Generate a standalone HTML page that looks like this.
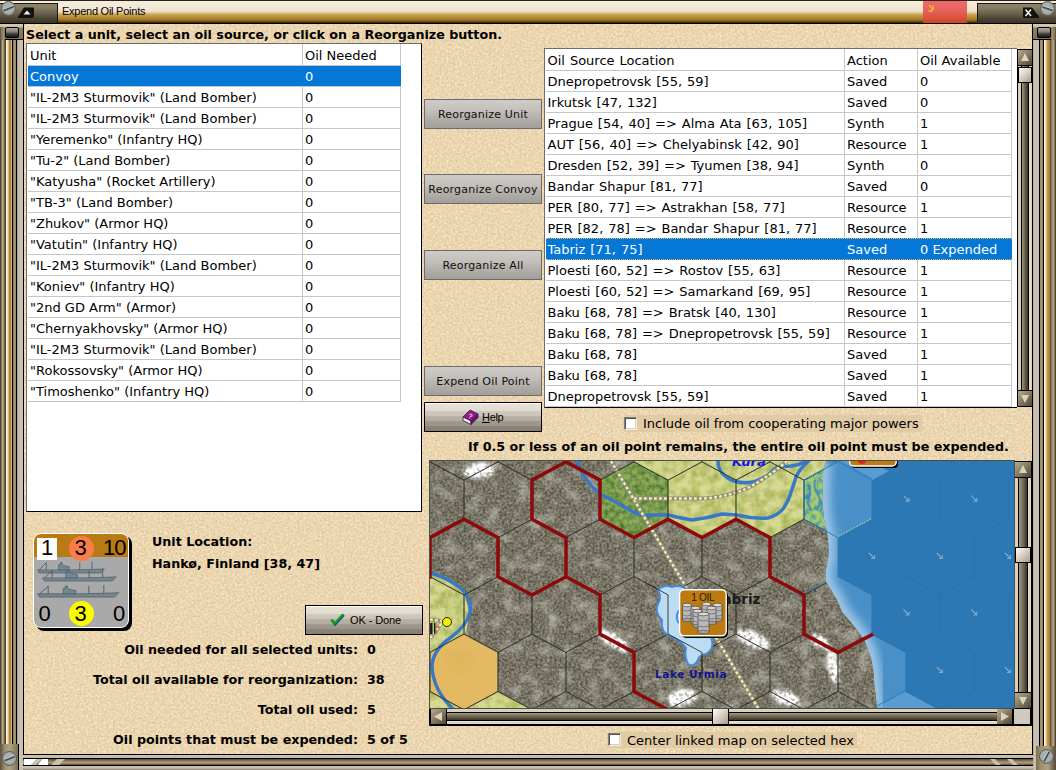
<!DOCTYPE html><html lang="en"><head><meta charset="utf-8"><title>Expend Oil Points</title><style>html,body{margin:0;padding:0}
body{width:1056px;height:770px;overflow:hidden;position:relative;background:#e9d4aa;font-family:"DejaVu Sans","Liberation Sans",sans-serif;font-size:13px;color:#000;line-height:20px}
div,span{box-sizing:border-box}
.abs{position:absolute}
#bgtex{position:absolute;left:0;top:0;width:1056px;height:770px}
#lt{position:absolute;left:26px;top:43px;width:396px;height:469px;background:#fff;border:1px solid #6e6e6e;border-right-color:#000;border-bottom-color:#000;overflow:hidden}
#rt{position:absolute;left:544px;top:48px;width:473px;height:360px;background:#fff;border:1px solid #6e6e6e;border-right:0;border-bottom-color:#000;overflow:hidden}
.row{position:absolute;left:1px;height:21px;border-bottom:1px solid #c6c6c6;white-space:nowrap}
#lt .row{width:373px}
#rt .row{width:466px}
.row span{position:absolute;top:1px;height:20px;line-height:20px}
.row.sel{background:#0577d6;color:#fff}
#rt .row.sel{border-top:1px dotted #e8b070;border-bottom:1px dotted #e8b070;top:189px!important;height:22px}
#rt .row.sel span{top:1px}
.vl{position:absolute;width:1px;background:#c6c6c6}
.c1{left:2px}.c2{left:277px}
.d1{left:1.5px;word-spacing:0.8px}.d2{left:301px}.d3{left:374px}
.b{position:absolute;font-weight:bold;font-size:12.7px;white-space:nowrap;line-height:16px;height:16px}
.t{position:absolute;white-space:nowrap;line-height:16px;height:16px}
.btn{position:absolute;width:118px;height:30px;border:1px solid #6c6c6c;background:linear-gradient(#cfcbc6 0%,#c4c0bb 35%,#b0aca7 70%,#a29e99 100%);font-size:11px;letter-spacing:0.2px;text-align:center;line-height:29px;white-space:nowrap;color:#111}
.btn2{position:absolute;width:118px;height:30px;border:1px solid #000;background:linear-gradient(#fffdf6 0,#fffdf6 1px,#e6e0d6 1px,#e0dad0 8px,#d0c9be 8px,#cac3b8 13px,#b9b2a6 13px,#b2ab9f 18px,#a19a8e 18px,#9a9387 23px,#8b8478 23px,#857e72 28px);font-family:"Liberation Sans",sans-serif;font-size:11px;white-space:nowrap;color:#000}
.cb{position:absolute;width:13px;height:13px;border:1px solid;border-color:#808080 #f4ecdc #f4ecdc #808080;background:#fff;box-shadow:inset 1px 1px 0 #505050,inset -1px -1px 0 #d8d0c4}
</style></head><body>
<svg id="bgtex" width="1056" height="770"><defs><filter color-interpolation-filters="sRGB" id="pf" x="0" y="0" width="100%" height="100%"><feTurbulence type="fractalNoise" baseFrequency="0.5" numOctaves="3" seed="3" result="n"/><feColorMatrix type="matrix" values="0 0 0 0 0.925  0 0 0 0 0.835  0 0 0 0 0.68  1.1 1.1 0 0 -0.72"/></filter><filter color-interpolation-filters="sRGB" id="pf2" x="0" y="0" width="100%" height="100%"><feTurbulence type="fractalNoise" baseFrequency="0.45" numOctaves="3" seed="11"/><feColorMatrix type="matrix" values="0 0 0 0 0.985  0 0 0 0 0.935  0 0 0 0 0.835  0 1.1 1.1 0 -0.8"/></filter></defs><rect width="1056" height="770" fill="#dfc597"/><rect width="1056" height="770" filter="url(#pf)"/><rect width="1056" height="770" filter="url(#pf2)"/></svg>
<div class="abs" style="left:0;top:0;width:1056px;height:24px;background:linear-gradient(to bottom,#2a2418 0px,#2a2418 1px,#f4ecdc 1px,#f4ecdc 2px,#f3ebdb 2px,#f3ebdb 4px,#f2eada 4px,#f2eada 6px,#f2e9d8 6px,#f2e9d8 7px,#f1e8d6 7px,#f1e8d6 8px,#f1e7d4 8px,#f1e7d4 9px,#f0e5d0 9px,#f0e5d0 10px,#efe2ca 10px,#efe2ca 11px,#ecdcc0 11px,#ecdcc0 12px,#e4cc9c 12px,#e4cc9c 13px,#d8b878 13px,#d8b878 14px,#cca858 14px,#cca858 15px,#c49c48 15px,#c49c48 16px,#bc9440 16px,#bc9440 17px,#b48c38 17px,#b48c38 18px,#ac8430 18px,#ac8430 19px,#a07828 19px,#a07828 20px,#8c6820 20px,#8c6820 21px,#6c5018 21px,#6c5018 22px,#3c2c0c 22px,#3c2c0c 23px,#000 23px,#000 24px)"></div>
<div class="abs" style="left:923px;top:1px;width:44px;height:22px;background:linear-gradient(#ec6a68,#e86460 40%,#dc5038 80%,#c84428)"></div>
<svg class="abs" style="left:926px;top:3px" width="10" height="10" viewBox="0 0 10 10"><path d="M3 2 L7 7 M6.5 2.5 Q9 5 5.5 8 Q4 8.5 2.5 7.5" stroke="#f4d020" stroke-width="1.2" fill="none"/></svg>
<div class="abs" style="left:0;top:3px;width:58px;height:20px;background:linear-gradient(#8c826a 0,#8a8068 3px,#6e644e 9px,#4e4636 14px,#3a3426 19px);border-right:1px solid #1a160e;border-top:1px solid #1a160e"></div>
<div class="abs" style="left:977px;top:3px;width:79px;height:20px;background:linear-gradient(#8c826a 0,#8a8068 3px,#6e644e 9px,#4e4636 14px,#3a3426 19px);border-left:1px solid #1a160e;border-top:1px solid #1a160e"></div>
<div class="abs" style="left:62px;top:4px;font-family:'Liberation Sans',sans-serif;font-size:11px;letter-spacing:-0.25px;line-height:14px;white-space:nowrap">Expend Oil Points</div>
<div class="abs" style="left:0;top:24px;width:24px;height:746px;background:linear-gradient(to right,#4a4232 0px,#4a4232 1px,#8a7c5c 1px,#8a7c5c 2px,#b0a284 2px,#b0a284 3px,#a09070 3px,#a09070 4px,#6c6048 4px,#6c6048 5px,#4c4434 5px,#4c4434 6px,#fff4e0 6px,#fff4e0 7px,#f4dcb8 7px,#f4dcb8 8px,#dcb478 8px,#dcb478 9px,#b88a3c 9px,#b88a3c 10px,#a88244 10px,#a88244 11px,#c4b498 11px,#c4b498 12px,#000 12px,#000 13px,#8c7e5e 13px,#8c7e5e 14px,#a89878 14px,#a89878 15px,#9c8c6c 15px,#9c8c6c 16px,#000 16px,#000 17px,#a49c8c 17px,#a49c8c 18px,#c8c0b0 18px,#c8c0b0 23px,#000 23px,#000 24px)"></div>
<div class="abs" style="left:1032px;top:24px;width:24px;height:746px;background:linear-gradient(to right,#000 0px,#000 1px,#b8b0a0 1px,#b8b0a0 2px,#c8c0b0 2px,#c8c0b0 7px,#000 7px,#000 8px,#9c8c6c 8px,#9c8c6c 9px,#a89878 9px,#a89878 10px,#8c7e5e 10px,#8c7e5e 11px,#000 11px,#000 12px,#fff4e0 12px,#fff4e0 13px,#f4dcb8 13px,#f4dcb8 14px,#e0bc80 14px,#e0bc80 15px,#c89840 15px,#c89840 16px,#b88a3c 16px,#b88a3c 17px,#a88244 17px,#a88244 18px,#5c5240 18px,#5c5240 19px,#8a7c5c 19px,#8a7c5c 20px,#a09070 20px,#a09070 21px,#b0a284 21px,#b0a284 22px,#8a7c5c 22px,#8a7c5c 23px,#4a4232 23px,#4a4232 24px)"></div>
<div class="abs" style="left:23px;top:754px;width:1010px;height:16px;background:linear-gradient(to bottom,#000 0px,#000 1px,#c8c0b0 1px,#c8c0b0 3px,#c0b8a8 3px,#c0b8a8 4px,#000 4px,#000 5px,#5c5240 5px,#5c5240 6px,#7c6e50 6px,#7c6e50 7px,#98886a 7px,#98886a 8px,#a89878 8px,#a89878 9px,#988868 9px,#988868 10px,#6c6048 10px,#6c6048 11px,#000 11px,#000 12px,#c8c0b0 12px,#c8c0b0 14px,#b8b0a0 14px,#b8b0a0 15px,#989080 15px,#989080 16px)"></div>
<div class="abs" style="left:0;top:24px;width:24px;height:16px;background:linear-gradient(#d4ccb4 0,#c4bca4 3px,#8c826a 4px,#7a7058 15px);border-right:1px solid #000;border-bottom:1px solid #000"></div><div class="abs" style="left:0;top:27px;width:5px;height:13px;background:linear-gradient(to right,#5c5240,#a09070 3px,#8a7c5c 5px)"></div>
<div class="abs" style="left:5px;top:27px;width:14px;height:11px;border:1px solid #000;border-radius:2px;background:linear-gradient(#b0a898,#8a8478 40%,#3a3830 70%,#1a1a18)"></div>
<div class="abs" style="left:1033px;top:24px;width:23px;height:16px;background:linear-gradient(#d4ccb4 0,#c4bca4 3px,#8c826a 4px,#7a7058 15px);border-bottom:1px solid #000"></div><div class="abs" style="left:1051px;top:27px;width:5px;height:13px;background:linear-gradient(to right,#8a7c5c,#a09070 2px,#5c5240 5px)"></div>
<div class="abs" style="left:1037px;top:27px;width:14px;height:11px;border:1px solid #000;border-radius:2px;background:linear-gradient(#b0a898,#8a8478 40%,#3a3830 70%,#1a1a18)"></div>
<div class="abs" style="left:0;top:744px;width:19px;height:26px;border-right:1px solid #000;background:linear-gradient(to right,#5c5240,#a09070 5px,#b0a284 10px,#7c6e50 18px)"></div>
<div class="abs" style="left:1036px;top:746px;width:20px;height:24px;background:linear-gradient(to right,#7c6e50,#a09070 5px,#b0a284 12px,#5c5240 19px)"></div>
<svg class="abs" style="left:1px;top:1px" width="15" height="15" viewBox="0 0 15 15"><circle cx="7.5" cy="7.5" r="7" fill="#9aa0a0" stroke="#5a5a52" stroke-width="1"/><circle cx="7" cy="7" r="5.5" fill="#aab0b0"/><line x1="2.5" y1="9.5" x2="12.5" y2="5.5" stroke="#4a4e4e" stroke-width="2" transform="rotate(0 7.5 7.5)"/><line x1="2.5" y1="8.3" x2="12.5" y2="4.3" stroke="#d0d4d4" stroke-width="0.8" transform="rotate(0 7.5 7.5)"/></svg>
<svg class="abs" style="left:1040px;top:1px" width="15" height="15" viewBox="0 0 15 15"><circle cx="7.5" cy="7.5" r="7" fill="#9aa0a0" stroke="#5a5a52" stroke-width="1"/><circle cx="7" cy="7" r="5.5" fill="#aab0b0"/><line x1="2.5" y1="9.5" x2="12.5" y2="5.5" stroke="#4a4e4e" stroke-width="2" transform="rotate(40 7.5 7.5)"/><line x1="2.5" y1="8.3" x2="12.5" y2="4.3" stroke="#d0d4d4" stroke-width="0.8" transform="rotate(40 7.5 7.5)"/></svg>
<svg class="abs" style="left:2px;top:751px" width="15" height="15" viewBox="0 0 15 15"><circle cx="7.5" cy="7.5" r="7" fill="#9aa0a0" stroke="#5a5a52" stroke-width="1"/><circle cx="7" cy="7" r="5.5" fill="#aab0b0"/><line x1="2.5" y1="9.5" x2="12.5" y2="5.5" stroke="#4a4e4e" stroke-width="2" transform="rotate(0 7.5 7.5)"/><line x1="2.5" y1="8.3" x2="12.5" y2="4.3" stroke="#d0d4d4" stroke-width="0.8" transform="rotate(0 7.5 7.5)"/></svg>
<svg class="abs" style="left:1039px;top:749px" width="15" height="15" viewBox="0 0 15 15"><circle cx="7.5" cy="7.5" r="7" fill="#9aa0a0" stroke="#5a5a52" stroke-width="1"/><circle cx="7" cy="7" r="5.5" fill="#aab0b0"/><line x1="2.5" y1="9.5" x2="12.5" y2="5.5" stroke="#4a4e4e" stroke-width="2" transform="rotate(-40 7.5 7.5)"/><line x1="2.5" y1="8.3" x2="12.5" y2="4.3" stroke="#d0d4d4" stroke-width="0.8" transform="rotate(-40 7.5 7.5)"/></svg>
<svg class="abs" style="left:17px;top:6px" width="18" height="13" viewBox="0 0 18 13"><path d="M1 11 L7 1.5 L16 1.5 Q17 1.5 17 2.5 L17 10 Q17 12 15 12 L2 12 Q0 12 1 11Z" fill="#14120e"/><path d="M6.5 8.5 L10 4.5 L13.5 8.5Z" fill="#f4f0e4"/></svg>
<svg class="abs" style="left:1022px;top:6px" width="18" height="13" viewBox="0 0 18 13"><path d="M1 1.5 L10 1.5 L17 10.5 Q17.5 12 16 12 L2 12 Q1 12 1 11Z" fill="#14120e"/><path d="M3.5 3.5 L9 10 M9 3.5 L3.5 10" stroke="#f4f0e4" stroke-width="1.6"/></svg>
<svg class="abs" style="left:24px;top:759px" width="70" height="6" viewBox="0 0 70 6"><path d="M0 0 L13 0 L7 6 L0 6Z" fill="#fff"/><path d="M18 0 L24 0 L24 6 L14 6Z" fill="#fff"/><path d="M13 0 L18 0 L12 6 L7 6Z M33 0 L41 0 L35 6 L27 6Z" fill="#c8c0b0"/></svg>
<svg class="abs" style="left:985px;top:759px" width="48" height="6" viewBox="0 0 48 6"><path d="M5 0 L10 0 L16 6 L11 6Z M22 0 L27 0 L33 6 L28 6Z" fill="#c8c0b0"/></svg>
<div id="lt">
<div class="vl" style="left:275px;top:0;height:358px"></div><div class="vl" style="left:373px;top:0;height:358px"></div>
<div class="row hd" style="top:1px"><span class="c1">Unit</span><span class="c2">Oil Needed</span></div>
<div class="row sel" style="top:22px"><span class="c1">Convoy</span><span class="c2">0</span></div>
<div class="row" style="top:43px"><span class="c1">&quot;IL-2M3 Sturmovik&quot; (Land Bomber)</span><span class="c2">0</span></div>
<div class="row" style="top:64px"><span class="c1">&quot;IL-2M3 Sturmovik&quot; (Land Bomber)</span><span class="c2">0</span></div>
<div class="row" style="top:85px"><span class="c1">&quot;Yeremenko&quot; (Infantry HQ)</span><span class="c2">0</span></div>
<div class="row" style="top:106px"><span class="c1">&quot;Tu-2&quot; (Land Bomber)</span><span class="c2">0</span></div>
<div class="row" style="top:127px"><span class="c1">&quot;Katyusha&quot; (Rocket Artillery)</span><span class="c2">0</span></div>
<div class="row" style="top:148px"><span class="c1">&quot;TB-3&quot; (Land Bomber)</span><span class="c2">0</span></div>
<div class="row" style="top:169px"><span class="c1">&quot;Zhukov&quot; (Armor HQ)</span><span class="c2">0</span></div>
<div class="row" style="top:190px"><span class="c1">&quot;Vatutin&quot; (Infantry HQ)</span><span class="c2">0</span></div>
<div class="row" style="top:211px"><span class="c1">&quot;IL-2M3 Sturmovik&quot; (Land Bomber)</span><span class="c2">0</span></div>
<div class="row" style="top:232px"><span class="c1">&quot;Koniev&quot; (Infantry HQ)</span><span class="c2">0</span></div>
<div class="row" style="top:253px"><span class="c1">&quot;2nd GD Arm&quot; (Armor)</span><span class="c2">0</span></div>
<div class="row" style="top:274px"><span class="c1">&quot;Chernyakhovsky&quot; (Armor HQ)</span><span class="c2">0</span></div>
<div class="row" style="top:295px"><span class="c1">&quot;IL-2M3 Sturmovik&quot; (Land Bomber)</span><span class="c2">0</span></div>
<div class="row" style="top:316px"><span class="c1">&quot;Rokossovsky&quot; (Armor HQ)</span><span class="c2">0</span></div>
<div class="row" style="top:337px"><span class="c1">&quot;Timoshenko&quot; (Infantry HQ)</span><span class="c2">0</span></div>
</div>
<div id="rt">
<div class="vl" style="left:299px;top:0;height:357px"></div><div class="vl" style="left:372px;top:0;height:357px"></div><div class="vl" style="left:466px;top:0;height:357px"></div>
<div class="row hd" style="top:1px"><span class="d1">Oil Source Location</span><span class="d2">Action</span><span class="d3">Oil Available</span></div>
<div class="row" style="top:22px"><span class="d1">Dnepropetrovsk [55, 59]</span><span class="d2">Saved</span><span class="d3">0</span></div>
<div class="row" style="top:43px"><span class="d1">Irkutsk [47, 132]</span><span class="d2">Saved</span><span class="d3">0</span></div>
<div class="row" style="top:64px"><span class="d1">Prague [54, 40] =&gt; Alma Ata [63, 105]</span><span class="d2">Synth</span><span class="d3">1</span></div>
<div class="row" style="top:85px"><span class="d1">AUT [56, 40] =&gt; Chelyabinsk [42, 90]</span><span class="d2">Resource</span><span class="d3">1</span></div>
<div class="row" style="top:106px"><span class="d1">Dresden [52, 39] =&gt; Tyumen [38, 94]</span><span class="d2">Synth</span><span class="d3">0</span></div>
<div class="row" style="top:127px"><span class="d1">Bandar Shapur [81, 77]</span><span class="d2">Saved</span><span class="d3">0</span></div>
<div class="row" style="top:148px"><span class="d1">PER [80, 77] =&gt; Astrakhan [58, 77]</span><span class="d2">Resource</span><span class="d3">1</span></div>
<div class="row" style="top:169px"><span class="d1">PER [82, 78] =&gt; Bandar Shapur [81, 77]</span><span class="d2">Resource</span><span class="d3">1</span></div>
<div class="row sel" style="top:190px"><span class="d1">Tabriz [71, 75]</span><span class="d2">Saved</span><span class="d3">0 Expended</span></div>
<div class="row" style="top:211px"><span class="d1">Ploesti [60, 52] =&gt; Rostov [55, 63]</span><span class="d2">Resource</span><span class="d3">1</span></div>
<div class="row" style="top:232px"><span class="d1">Ploesti [60, 52] =&gt; Samarkand [69, 95]</span><span class="d2">Resource</span><span class="d3">1</span></div>
<div class="row" style="top:253px"><span class="d1">Baku [68, 78] =&gt; Bratsk [40, 130]</span><span class="d2">Resource</span><span class="d3">1</span></div>
<div class="row" style="top:274px"><span class="d1">Baku [68, 78] =&gt; Dnepropetrovsk [55, 59]</span><span class="d2">Resource</span><span class="d3">1</span></div>
<div class="row" style="top:295px"><span class="d1">Baku [68, 78]</span><span class="d2">Saved</span><span class="d3">1</span></div>
<div class="row" style="top:316px"><span class="d1">Baku [68, 78]</span><span class="d2">Saved</span><span class="d3">1</span></div>
<div class="row" style="top:337px"><span class="d1">Dnepropetrovsk [55, 59]</span><span class="d2">Saved</span><span class="d3">1</span></div>
</div>
<div class="b" style="left:26px;top:27px;">Select a unit, select an oil source, or click on a Reorganize button.</div>
<div class="b" style="left:468px;top:439px;">If 0.5 or less of an oil point remains, the entire oil point must be expended.</div>
<div class="b" style="left:152px;top:534px;">Unit Location:</div>
<div class="b" style="left:152px;top:556px;">Hank&oslash;, Finland [38, 47]</div>
<div class="b" style="right:698px;top:642px">Oil needed for all selected units:</div>
<div class="b" style="left:367px;top:642px;">0</div>
<div class="b" style="right:698px;top:672px">Total oil available for reorganization:</div>
<div class="b" style="left:367px;top:672px;">38</div>
<div class="b" style="right:698px;top:702px">Total oil used:</div>
<div class="b" style="left:367px;top:702px;">5</div>
<div class="b" style="right:698px;top:732px">Oil points that must be expended:</div>
<div class="b" style="left:367px;top:732px;">5 of 5</div>
<div class="abs" style="left:624px;top:415px;width:298px;height:17px;background:#e0cba4"></div>
<div class="abs" style="left:607px;top:732px;width:250px;height:16px;background:#e0cba4"></div>
<div class="t" style="left:643px;top:416px">Include oil from cooperating major powers</div>
<div class="t" style="left:627px;top:733px">Center linked map on selected hex</div>
<div class="cb" style="left:624px;top:417px"></div>
<div class="cb" style="left:608px;top:733px"></div>
<div class="btn" style="left:424px;top:99px">Reorganize Unit</div>
<div class="btn" style="left:424px;top:174px">Reorganize Convoy</div>
<div class="btn" style="left:424px;top:250px">Reorganize All</div>
<div class="btn" style="left:424px;top:366px">Expend Oil Point</div>
<div class="btn2" style="left:424px;top:402px"><svg class="abs" style="left:37px;top:5px" width="18" height="18" viewBox="0 0 18 18"><path d="M1 9 L8 2 L16 6 L9 13Z" fill="#8a1a9a" stroke="#3a0a4a" stroke-width="0.8"/><path d="M1 9 L9 13 L9 16.5 L1 12.5Z" fill="#f0f0f0" stroke="#3a0a4a" stroke-width="0.8"/><path d="M9 13 L16 6 L16 9.5 L9 16.5Z" fill="#6a107a" stroke="#3a0a4a" stroke-width="0.8"/><text x="6.2" y="10.5" font-family="Liberation Sans,sans-serif" font-size="7" font-weight="bold" fill="#f4e020" transform="rotate(20 8 8)">?</text></svg><span class="abs" style="left:57px;top:7px;line-height:14px;letter-spacing:-0.3px"><u>H</u>elp</span></div>
<div class="btn2" style="left:305px;top:605px"><svg class="abs" style="left:23px;top:6px" width="16" height="14" viewBox="0 0 18 16"><path d="M2.5 8.5 L6 13.5 L16 2.5" stroke="#1030d0" stroke-width="2.6" fill="none" transform="translate(0.8,0.8)"/><path d="M2.5 8.5 L6 13.5 L16 2.5" stroke="#10a010" stroke-width="2.6" fill="none"/></svg><span class="abs" style="left:44px;top:7px;line-height:14px;letter-spacing:-0.1px">OK - Done</span></div>
<div class="abs" style="left:1017px;top:49px;width:16px;height:358px;background:#000"><div class="abs" style="left:1px;top:17px;width:14px;height:324px;background:linear-gradient(to right,#d8d0c0 0,#d8d0c0 3px,#000 3px,#000 4px,#a09880 4px,#6a5e4a 7px,#3a3424 10px,#000 10px,#000 11px,#e8e0d0 11px,#d8d0c0 14px)"></div><div class="abs" style="left:1px;top:1px;width:14px;height:15px;background:linear-gradient(135deg,#b8ac90 0%,#8a7e64 45%,#4e4636 100%)"><svg class="abs" style="left:3.0px;top:3px" width="8" height="8" viewBox="0 0 8 8"><path d="M0 8 L4 0 L8 8Z" fill="#ddd2bc"/></svg></div><div class="abs" style="left:1px;top:342px;width:14px;height:15px;background:linear-gradient(135deg,#b8ac90 0%,#8a7e64 45%,#4e4636 100%)"><svg class="abs" style="left:3.0px;top:4px" width="8" height="8" viewBox="0 0 8 8"><path d="M0 0 L4 8 L8 0Z" fill="#ddd2bc"/></svg></div><div class="abs" style="left:1px;top:18px;width:14px;height:16px;background:#000"><div class="abs" style="left:1px;top:1px;width:12px;height:14px;background:linear-gradient(135deg,#fff 0%,#e0d8cc 40%,#a89c8c 100%)"></div></div></div>
<div class="abs" style="left:1014px;top:461px;width:18px;height:248px;background:#000"><div class="abs" style="left:1px;top:17px;width:16px;height:214px;background:linear-gradient(to right,#d8d0c0 0,#d8d0c0 3px,#000 3px,#000 4px,#a09880 4px,#6a5e4a 9px,#3a3424 12px,#000 12px,#000 13px,#e8e0d0 13px,#d8d0c0 16px)"></div><div class="abs" style="left:1px;top:1px;width:16px;height:15px;background:linear-gradient(135deg,#b8ac90 0%,#8a7e64 45%,#4e4636 100%)"><svg class="abs" style="left:4.0px;top:3px" width="8" height="8" viewBox="0 0 8 8"><path d="M0 8 L4 0 L8 8Z" fill="#ddd2bc"/></svg></div><div class="abs" style="left:1px;top:232px;width:16px;height:15px;background:linear-gradient(135deg,#b8ac90 0%,#8a7e64 45%,#4e4636 100%)"><svg class="abs" style="left:4.0px;top:4px" width="8" height="8" viewBox="0 0 8 8"><path d="M0 0 L4 8 L8 0Z" fill="#ddd2bc"/></svg></div><div class="abs" style="left:1px;top:86px;width:16px;height:16px;background:#000"><div class="abs" style="left:1px;top:1px;width:14px;height:14px;background:linear-gradient(135deg,#fff 0%,#e0d8cc 40%,#a89c8c 100%)"></div></div></div>
<div class="abs" style="left:429px;top:708px;width:603px;height:18px;background:#000"><div class="abs" style="left:18px;top:1px;width:550px;height:15px;background:linear-gradient(#d8d0c0 0,#d8d0c0 3px,#000 3px,#000 4px,#a09880 4px,#6a5e4a 8px,#3a3424 11px,#000 11px,#000 12px,#e8e0d0 12px,#d8d0c0 15px)"></div><div class="abs" style="left:2px;top:1px;width:15px;height:15px;background:linear-gradient(135deg,#b8ac90 0%,#8a7e64 45%,#4e4636 100%)"><svg class="abs" style="left:3px;top:3px" width="8" height="9" viewBox="0 0 8 9"><path d="M8 0 L0 4.5 L8 9Z" fill="#ddd2bc"/></svg></div><div class="abs" style="left:568px;top:1px;width:15px;height:15px;background:linear-gradient(135deg,#b8ac90 0%,#8a7e64 45%,#4e4636 100%)"><svg class="abs" style="left:4px;top:3px" width="8" height="9" viewBox="0 0 8 9"><path d="M0 0 L8 4.5 L0 9Z" fill="#ddd2bc"/></svg></div><div class="abs" style="left:585px;top:1px;width:16px;height:15px;background:#cfc9c0"></div><div class="abs" style="left:283px;top:0px;width:17px;height:17px;background:#000"><div class="abs" style="left:1px;top:1px;width:15px;height:15px;background:linear-gradient(135deg,#fff 0%,#e0d8cc 40%,#a89c8c 100%)"></div></div></div>
<div class="abs" style="left:33px;top:533px;width:100px;height:99px"><div class="abs" style="left:3px;top:3px;width:96px;height:95px;border-radius:8px;background:#000"></div><div class="abs" style="left:0;top:0;width:96px;height:95px;border-radius:8px;border:1px solid #fff;background:linear-gradient(#b87a14 0,#b87a14 23px,#a9a9a9 23px);overflow:hidden;font-family:'Liberation Sans',sans-serif;font-size:22px;line-height:22px"><div class="abs" style="left:3px;top:4px;width:20px;height:22px;background:#fff"></div><div class="abs" style="left:34.5px;top:1.5px;width:25px;height:25px;border-radius:50%;background:#fa7c48"></div><div class="abs" style="left:34.5px;top:66.5px;width:25px;height:25px;border-radius:50%;background:#fafa00"></div><span class="abs" style="left:7px;top:3px">1</span><span class="abs" style="left:40.5px;top:3px">3</span><span class="abs" style="left:69px;top:3px;letter-spacing:-1px">10</span><span class="abs" style="left:4.5px;top:69px">0</span><span class="abs" style="left:40.5px;top:69px">3</span><span class="abs" style="left:79px;top:69px">0</span><svg class="abs" style="left:0;top:24px" width="94" height="44" viewBox="0 0 94 44"><g transform="translate(3.5,3.5) scale(0.88,1.05)"><g fill="#748690" stroke="#44545e" stroke-width="0.6"><path d="M0 8 L2 11 L72 11 L76 7 L62 7.5 L40 8 L10 8Z"/><path d="M24 8 L24 3 L26 3 L26 1 L28 1 L28 3 L30 4 L36 5 L36 8Z"/><path d="M2 8 L10 1 L10 8 M48 8 L48 1 M62 8 L62 0" fill="none" stroke-width="0.8"/></g></g><g transform="translate(8.5,11.5) scale(0.97,1.05)"><g fill="#748690" stroke="#44545e" stroke-width="0.6"><path d="M0 8 L2 11 L72 11 L76 7 L62 7.5 L40 8 L10 8Z"/><path d="M24 8 L24 3 L26 3 L26 1 L28 1 L28 3 L30 4 L36 5 L36 8Z"/><path d="M2 8 L10 1 L10 8 M48 8 L48 1 M62 8 L62 0" fill="none" stroke-width="0.8"/></g></g><g transform="translate(3.5,27) scale(1.07,1.1)"><g fill="#748690" stroke="#44545e" stroke-width="0.6"><path d="M0 8 L2 11 L72 11 L76 7 L62 7.5 L40 8 L10 8Z"/><path d="M24 8 L24 3 L26 3 L26 1 L28 1 L28 3 L30 4 L36 5 L36 8Z"/><path d="M2 8 L10 1 L10 8 M48 8 L48 1 M62 8 L62 0" fill="none" stroke-width="0.8"/></g></g></svg></div></div>
<div class="abs" style="left:429px;top:460px;width:586px;height:249px;background:#4a5048"></div>
<svg class="abs" style="left:430px;top:461px" width="584" height="247" viewBox="430 461 584 247">
<defs>
<filter color-interpolation-filters="sRGB" id="mt" x="0" y="0" width="100%" height="100%"><feTurbulence type="fractalNoise" baseFrequency="0.42" numOctaves="2" seed="5" result="hi"/><feColorMatrix in="hi" type="matrix" values="0.5 0 0 0 0.205  0.5 0 0 0 0.19  0.5 0 0 0 0.135  0 0 0 0 1" result="hic"/><feTurbulence type="fractalNoise" baseFrequency="0.07" numOctaves="2" seed="8" result="lo"/><feColorMatrix in="lo" type="matrix" values="0 0 0 0 0.85  0 0 0 0 0.85  0 0 0 0 0.80  1.5 0 0 0 -0.72" result="loc"/><feComposite in="loc" in2="hic" operator="over"/></filter>
<filter color-interpolation-filters="sRGB" id="gt" x="0" y="0" width="100%" height="100%"><feTurbulence type="fractalNoise" baseFrequency="0.2" numOctaves="3" seed="9"/><feColorMatrix type="matrix" values="0 0 0 0 0.2  0 0 0 0 0.36  0 0 0 0 0.08  1.5 0 0 0 -0.52"/></filter>
<filter color-interpolation-filters="sRGB" id="pt" x="0" y="0" width="100%" height="100%"><feTurbulence type="fractalNoise" baseFrequency="0.11" numOctaves="3" seed="14"/><feColorMatrix type="matrix" values="0 0 0 0 0.62  0 0 0 0 0.68  0 0 0 0 0.30  1.8 0 0 0 -0.62"/></filter>
<filter color-interpolation-filters="sRGB" id="mrt" x="0" y="0" width="100%" height="100%"><feTurbulence type="fractalNoise" baseFrequency="0.18" numOctaves="3" seed="21"/><feColorMatrix type="matrix" values="0 0 0 0 0.25  0 0 0 0 0.55  0 0 0 0 0.7  2.4 0 0 0 -0.95"/></filter>
<filter color-interpolation-filters="sRGB" id="bl2"><feGaussianBlur stdDeviation="2"/></filter>
<filter color-interpolation-filters="sRGB" id="bl1"><feGaussianBlur stdDeviation="1.1"/></filter>
<filter color-interpolation-filters="sRGB" id="bl5"><feGaussianBlur stdDeviation="5"/></filter>
<filter color-interpolation-filters="sRGB" id="snow" x="-30%" y="-30%" width="160%" height="160%"><feTurbulence type="fractalNoise" baseFrequency="0.3" numOctaves="3" seed="2" result="n"/><feDisplacementMap in="SourceGraphic" in2="n" scale="9" result="d"/><feGaussianBlur in="d" stdDeviation="1.6" result="b"/><feColorMatrix in="n" type="matrix" values="0 0 0 0 1  0 0 0 0 1  0 0 0 0 1  0 3.2 0 0 -0.9" result="na"/><feComposite in="b" in2="na" operator="arithmetic" k1="1.1" k2="0.35" k3="0" k4="0"/></filter>
<clipPath id="land"><path d="M430 461 L826 461 Q822 470 823 480 Q822 500 824 520 Q830 540 828 560 Q824 575 826 582 Q838 600 842 612 Q858 630 864 640 Q874 660 874 680 L877 708 L430 708Z"/></clipPath>
</defs>
<rect x="430" y="461" width="584" height="247" fill="#2b78b4"/>
<polygon points="838.0,461.8 872.0,480.1 872.0,519.3 838.0,537.6 804.0,519.3 804.0,480.1" fill="#4a90c8"/>
<polygon points="872.0,404.4 906.0,422.7 906.0,461.9 872.0,480.2 838.0,461.9 838.0,422.7" fill="#5a9cd0"/>
<polygon points="838.0,576.6 872.0,594.9 872.0,634.1 838.0,652.4 804.0,634.1 804.0,594.9" fill="#4a90c8"/>
<polygon points="872.0,634.0 906.0,652.3 906.0,691.5 872.0,709.8 838.0,691.5 838.0,652.3" fill="#4a90c8"/>
<polygon points="906.0,691.4 940.0,709.7 940.0,748.9 906.0,767.2 872.0,748.9 872.0,709.7" fill="#5a9cd0"/>
<polygon points="804.0,519.2 838.0,537.5 838.0,576.7 804.0,595.0 770.0,576.7 770.0,537.5" fill="#4a90c8"/>
<path d="M826 461 Q822 470 823 480 Q822 500 824 520 Q830 540 828 560 Q824 575 826 582 Q838 600 842 612 Q858 630 864 640 Q874 660 874 680 L877 708" fill="none" stroke="#a8cce8" stroke-width="14" filter="url(#bl5)" opacity="0.95"/>
<polygon points="906.0,404.4 940.0,422.7 940.0,461.9 906.0,480.2 872.0,461.9 872.0,422.7" fill="#2b78b4" stroke="#2b78b4" stroke-width="0.6"/>
<polygon points="974.0,461.8 1008.0,480.1 1008.0,519.3 974.0,537.6 940.0,519.3 940.0,480.1" fill="#2b78b4" stroke="#2b78b4" stroke-width="0.6"/>
<polygon points="872.0,519.2 906.0,537.5 906.0,576.7 872.0,595.0 838.0,576.7 838.0,537.5" fill="#2b78b4" stroke="#2b78b4" stroke-width="0.6"/>
<polygon points="940.0,519.2 974.0,537.5 974.0,576.7 940.0,595.0 906.0,576.7 906.0,537.5" fill="#2b78b4" stroke="#2b78b4" stroke-width="0.6"/>
<polygon points="906.0,576.6 940.0,594.9 940.0,634.1 906.0,652.4 872.0,634.1 872.0,594.9" fill="#2b78b4" stroke="#2b78b4" stroke-width="0.6"/>
<polygon points="974.0,576.6 1008.0,594.9 1008.0,634.1 974.0,652.4 940.0,634.1 940.0,594.9" fill="#2b78b4" stroke="#2b78b4" stroke-width="0.6"/>
<polygon points="940.0,634.0 974.0,652.3 974.0,691.5 940.0,709.8 906.0,691.5 906.0,652.3" fill="#2b78b4" stroke="#2b78b4" stroke-width="0.6"/>
<polygon points="1008.0,634.0 1042.0,652.3 1042.0,691.5 1008.0,709.8 974.0,691.5 974.0,652.3" fill="#2b78b4" stroke="#2b78b4" stroke-width="0.6"/>
<polygon points="940.0,404.4 974.0,422.7 974.0,461.9 940.0,480.2 906.0,461.9 906.0,422.7" fill="#2b78b4" stroke="#2b78b4" stroke-width="0.6"/>
<polygon points="1008.0,404.4 1042.0,422.7 1042.0,461.9 1008.0,480.2 974.0,461.9 974.0,422.7" fill="#2b78b4" stroke="#2b78b4" stroke-width="0.6"/>
<polygon points="1008.0,519.2 1042.0,537.5 1042.0,576.7 1008.0,595.0 974.0,576.7 974.0,537.5" fill="#2b78b4" stroke="#2b78b4" stroke-width="0.6"/>
<polygon points="1042.0,461.8 1076.0,480.1 1076.0,519.3 1042.0,537.6 1008.0,519.3 1008.0,480.1" fill="#2b78b4" stroke="#2b78b4" stroke-width="0.6"/>
<polygon points="1042.0,576.6 1076.0,594.9 1076.0,634.1 1042.0,652.4 1008.0,634.1 1008.0,594.9" fill="#2b78b4" stroke="#2b78b4" stroke-width="0.6"/>
<polygon points="974.0,691.4 1008.0,709.7 1008.0,748.9 974.0,767.2 940.0,748.9 940.0,709.7" fill="#2b78b4" stroke="#2b78b4" stroke-width="0.6"/>
<polygon points="974.0,461.8 1008.0,480.1 1008.0,519.3 974.0,537.6 940.0,519.3 940.0,480.1" fill="none" stroke="#2973ae" stroke-width="0.7"/>
<polygon points="940.0,519.2 974.0,537.5 974.0,576.7 940.0,595.0 906.0,576.7 906.0,537.5" fill="none" stroke="#2973ae" stroke-width="0.7"/>
<polygon points="906.0,576.6 940.0,594.9 940.0,634.1 906.0,652.4 872.0,634.1 872.0,594.9" fill="none" stroke="#2973ae" stroke-width="0.7"/>
<polygon points="974.0,576.6 1008.0,594.9 1008.0,634.1 974.0,652.4 940.0,634.1 940.0,594.9" fill="none" stroke="#2973ae" stroke-width="0.7"/>
<polygon points="940.0,634.0 974.0,652.3 974.0,691.5 940.0,709.8 906.0,691.5 906.0,652.3" fill="none" stroke="#2973ae" stroke-width="0.7"/>
<polygon points="1008.0,519.2 1042.0,537.5 1042.0,576.7 1008.0,595.0 974.0,576.7 974.0,537.5" fill="none" stroke="#2973ae" stroke-width="0.7"/>
<polygon points="1008.0,634.0 1042.0,652.3 1042.0,691.5 1008.0,709.8 974.0,691.5 974.0,652.3" fill="none" stroke="#2973ae" stroke-width="0.7"/>
<g clip-path="url(#land)">
<rect x="430" y="461" width="460" height="247" fill="#868272"/>
<rect x="430" y="461" width="460" height="247" filter="url(#mt)" opacity="0.95"/>
<polygon points="702.0,461.8 736.0,480.1 736.0,519.3 702.0,537.6 668.0,519.3 668.0,480.1" fill="#d6d992"/>
<polygon points="770.0,461.8 804.0,480.1 804.0,519.3 770.0,537.6 736.0,519.3 736.0,480.1" fill="#d6d992"/>
<polygon points="668.0,404.4 702.0,422.7 702.0,461.9 668.0,480.2 634.0,461.9 634.0,422.7" fill="#d6d992"/>
<polygon points="736.0,404.4 770.0,422.7 770.0,461.9 736.0,480.2 702.0,461.9 702.0,422.7" fill="#d6d992"/>
<polygon points="804.0,404.4 838.0,422.7 838.0,461.9 804.0,480.2 770.0,461.9 770.0,422.7" fill="#d6d992"/>
<polygon points="430.0,576.6 464.0,594.9 464.0,634.1 430.0,652.4 396.0,634.1 396.0,594.9" fill="#d6d992"/>
<polygon points="430.0,691.4 464.0,709.7 464.0,748.9 430.0,767.2 396.0,748.9 396.0,709.7" fill="#d6d992"/>
<polygon points="498.0,691.4 532.0,709.7 532.0,748.9 498.0,767.2 464.0,748.9 464.0,709.7" fill="#d6d992"/>
<path d="M430 572 Q450 578 464 594 Q472 612 466 632 L440 650 L430 660Z" fill="#d6d992"/>
<path d="M430 640 L464 632 L430 655Z" fill="#d6d992"/>
<rect x="684" y="500" width="8" height="6" fill="#c4bc78" opacity="0.7"/>
<rect x="650" y="512" width="7" height="5" fill="#c4bc78" opacity="0.7"/>
<rect x="715" y="505" width="6" height="8" fill="#c4bc78" opacity="0.7"/>
<rect x="745" y="495" width="8" height="7" fill="#c4bc78" opacity="0.7"/>
<rect x="760" y="510" width="6" height="6" fill="#c4bc78" opacity="0.7"/>
<rect x="700" y="470" width="6" height="5" fill="#c4bc78" opacity="0.7"/>
<rect x="780" y="470" width="6" height="8" fill="#c4bc78" opacity="0.7"/>
<rect x="440" y="600" width="8" height="8" fill="#c4bc78" opacity="0.7"/>
<rect x="448" y="590" width="5" height="6" fill="#c4bc78" opacity="0.7"/>
<clipPath id="pc"><path d="M702.0,461.8 L736.0,480.1 L736.0,519.3 L702.0,537.6 L668.0,519.3 L668.0,480.1Z M770.0,461.8 L804.0,480.1 L804.0,519.3 L770.0,537.6 L736.0,519.3 L736.0,480.1Z M668.0,404.4 L702.0,422.7 L702.0,461.9 L668.0,480.2 L634.0,461.9 L634.0,422.7Z M736.0,404.4 L770.0,422.7 L770.0,461.9 L736.0,480.2 L702.0,461.9 L702.0,422.7Z M804.0,404.4 L838.0,422.7 L838.0,461.9 L804.0,480.2 L770.0,461.9 L770.0,422.7Z M430.0,576.6 L464.0,594.9 L464.0,634.1 L430.0,652.4 L396.0,634.1 L396.0,594.9Z M430.0,691.4 L464.0,709.7 L464.0,748.9 L430.0,767.2 L396.0,748.9 L396.0,709.7Z M498.0,691.4 L532.0,709.7 L532.0,748.9 L498.0,767.2 L464.0,748.9 L464.0,709.7Z M430 572 L470 590 L470 650 L430 660Z"/></clipPath><g clip-path="url(#pc)"><rect x="430" y="461" width="460" height="247" filter="url(#pt)"/></g>
<polygon points="634.0,461.8 668.0,480.1 668.0,519.3 634.0,537.6 600.0,519.3 600.0,480.1" fill="#8cab5c"/>
<clipPath id="fc"><polygon points="634.0,461.8 668.0,480.1 668.0,519.3 634.0,537.6 600.0,519.3 600.0,480.1"/></clipPath><g clip-path="url(#fc)"><rect x="598" y="458" width="72" height="82" filter="url(#gt)"/></g>
<polygon points="838.0,461.8 872.0,480.1 872.0,519.3 838.0,537.6 804.0,519.3 804.0,480.1" fill="#a8cc6c"/>
<clipPath id="mc"><polygon points="838.0,461.8 872.0,480.1 872.0,519.3 838.0,537.6 804.0,519.3 804.0,480.1"/></clipPath><g clip-path="url(#mc)"><rect x="802" y="458" width="30" height="82" filter="url(#mrt)"/></g>
<path d="M808 485 q4 6 1 12 q-3 8 3 14 M815 480 q-2 8 3 14 q4 8 -1 16 M820 500 q3 6 0 12" stroke="#3a88c0" stroke-width="2.2" fill="none" opacity="0.8"/>
<polygon points="464.0,634.0 498.0,652.3 498.0,691.5 464.0,709.8 430.0,691.5 430.0,652.3" fill="#e3ba62"/>
<ellipse cx="460" cy="662" rx="16" ry="12" fill="#dcae54" filter="url(#bl5)" opacity="0.35"/>
<ellipse cx="479" cy="471" rx="15" ry="7.5" fill="#f4f4f4" transform="rotate(-5 479 471)" filter="url(#snow)"/>
<ellipse cx="613" cy="640" rx="18" ry="6.5" fill="#f4f4f4" transform="rotate(30 613 640)" filter="url(#snow)"/>
<ellipse cx="753" cy="639" rx="18" ry="7.5" fill="#f4f4f4" transform="rotate(25 753 639)" filter="url(#snow)"/>
<ellipse cx="682" cy="698" rx="15" ry="8" fill="#f4f4f4" transform="rotate(-15 682 698)" filter="url(#snow)"/>
<ellipse cx="786" cy="698" rx="15" ry="6.5" fill="#f4f4f4" transform="rotate(18 786 698)" filter="url(#snow)"/>
<ellipse cx="833" cy="665" rx="5" ry="19" fill="#f4f4f4" transform="rotate(-8 833 665)" filter="url(#snow)"/>
<ellipse cx="820" cy="642" rx="12" ry="5" fill="#f4f4f4" transform="rotate(30 820 642)" filter="url(#snow)"/>
</g>
<g fill="none" stroke="#3878c8" stroke-width="3.4" stroke-linecap="round">
<path d="M577 461 Q582 475 589 483 Q596 492 604 496 Q616 502 628 509 Q636 514 643 515 L668 515 Q680 518 692 520 Q708 518 722 514 L737 515 Q752 519 768 518 Q778 515 783 509 Q789 500 791 492 Q794 484 796 477 Q800 468 809 461"/>
<path d="M718 461 Q718 468 722 473 Q727 479 734 481 Q744 484 753 482 Q762 479 768 475 Q772 470 776 468 Q784 466 791 466 Q800 465 806 461"/>
<path d="M430 573 Q448 578 462 589 Q472 600 470 612 Q467 626 450 638 Q433 650 432 666 Q433 690 453 709"/>
</g>
<path d="M611 461 L758 708" fill="none" stroke="#8c8c86" stroke-width="4"/><path d="M611 461 L758 708" fill="none" stroke="#f6f0a0" stroke-width="2.4" stroke-dasharray="2.8 2.2"/>
<path d="M634 498.5 L706 498.5 Q730 496 748 488 Q770 476 787 461" fill="none" stroke="#8c8c86" stroke-width="4"/><path d="M634 498.5 L706 498.5 Q730 496 748 488 Q770 476 787 461" fill="none" stroke="#f6f0a0" stroke-width="2.4" stroke-dasharray="2.8 2.2"/>
<path d="M430 619.5 L441 621" fill="none" stroke="#8c8c86" stroke-width="4"/><path d="M430 619.5 L441 621" fill="none" stroke="#f6f0a0" stroke-width="2.4" stroke-dasharray="2.8 2.2"/>
<path d="M441 624 L430 638" fill="none" stroke="#8c8c86" stroke-width="4"/><path d="M441 624 L430 638" fill="none" stroke="#f6f0a0" stroke-width="2.4" stroke-dasharray="2.8 2.2"/>
<g clip-path="url(#land)" fill="none" stroke="#2e2e2a" stroke-width="0.65">
<polygon points="396.0,404.4 430.0,422.7 430.0,461.9 396.0,480.2 362.0,461.9 362.0,422.7"/>
<polygon points="464.0,404.4 498.0,422.7 498.0,461.9 464.0,480.2 430.0,461.9 430.0,422.7"/>
<polygon points="532.0,404.4 566.0,422.7 566.0,461.9 532.0,480.2 498.0,461.9 498.0,422.7"/>
<polygon points="600.0,404.4 634.0,422.7 634.0,461.9 600.0,480.2 566.0,461.9 566.0,422.7"/>
<polygon points="668.0,404.4 702.0,422.7 702.0,461.9 668.0,480.2 634.0,461.9 634.0,422.7"/>
<polygon points="736.0,404.4 770.0,422.7 770.0,461.9 736.0,480.2 702.0,461.9 702.0,422.7"/>
<polygon points="804.0,404.4 838.0,422.7 838.0,461.9 804.0,480.2 770.0,461.9 770.0,422.7"/>
<polygon points="872.0,404.4 906.0,422.7 906.0,461.9 872.0,480.2 838.0,461.9 838.0,422.7"/>
<polygon points="430.0,461.8 464.0,480.1 464.0,519.3 430.0,537.6 396.0,519.3 396.0,480.1"/>
<polygon points="498.0,461.8 532.0,480.1 532.0,519.3 498.0,537.6 464.0,519.3 464.0,480.1"/>
<polygon points="566.0,461.8 600.0,480.1 600.0,519.3 566.0,537.6 532.0,519.3 532.0,480.1"/>
<polygon points="634.0,461.8 668.0,480.1 668.0,519.3 634.0,537.6 600.0,519.3 600.0,480.1"/>
<polygon points="702.0,461.8 736.0,480.1 736.0,519.3 702.0,537.6 668.0,519.3 668.0,480.1"/>
<polygon points="770.0,461.8 804.0,480.1 804.0,519.3 770.0,537.6 736.0,519.3 736.0,480.1"/>
<polygon points="838.0,461.8 872.0,480.1 872.0,519.3 838.0,537.6 804.0,519.3 804.0,480.1"/>
<polygon points="396.0,519.2 430.0,537.5 430.0,576.7 396.0,595.0 362.0,576.7 362.0,537.5"/>
<polygon points="464.0,519.2 498.0,537.5 498.0,576.7 464.0,595.0 430.0,576.7 430.0,537.5"/>
<polygon points="532.0,519.2 566.0,537.5 566.0,576.7 532.0,595.0 498.0,576.7 498.0,537.5"/>
<polygon points="600.0,519.2 634.0,537.5 634.0,576.7 600.0,595.0 566.0,576.7 566.0,537.5"/>
<polygon points="668.0,519.2 702.0,537.5 702.0,576.7 668.0,595.0 634.0,576.7 634.0,537.5"/>
<polygon points="736.0,519.2 770.0,537.5 770.0,576.7 736.0,595.0 702.0,576.7 702.0,537.5"/>
<polygon points="804.0,519.2 838.0,537.5 838.0,576.7 804.0,595.0 770.0,576.7 770.0,537.5"/>
<polygon points="872.0,519.2 906.0,537.5 906.0,576.7 872.0,595.0 838.0,576.7 838.0,537.5"/>
<polygon points="430.0,576.6 464.0,594.9 464.0,634.1 430.0,652.4 396.0,634.1 396.0,594.9"/>
<polygon points="498.0,576.6 532.0,594.9 532.0,634.1 498.0,652.4 464.0,634.1 464.0,594.9"/>
<polygon points="566.0,576.6 600.0,594.9 600.0,634.1 566.0,652.4 532.0,634.1 532.0,594.9"/>
<polygon points="634.0,576.6 668.0,594.9 668.0,634.1 634.0,652.4 600.0,634.1 600.0,594.9"/>
<polygon points="702.0,576.6 736.0,594.9 736.0,634.1 702.0,652.4 668.0,634.1 668.0,594.9"/>
<polygon points="770.0,576.6 804.0,594.9 804.0,634.1 770.0,652.4 736.0,634.1 736.0,594.9"/>
<polygon points="838.0,576.6 872.0,594.9 872.0,634.1 838.0,652.4 804.0,634.1 804.0,594.9"/>
<polygon points="396.0,634.0 430.0,652.3 430.0,691.5 396.0,709.8 362.0,691.5 362.0,652.3"/>
<polygon points="464.0,634.0 498.0,652.3 498.0,691.5 464.0,709.8 430.0,691.5 430.0,652.3"/>
<polygon points="532.0,634.0 566.0,652.3 566.0,691.5 532.0,709.8 498.0,691.5 498.0,652.3"/>
<polygon points="600.0,634.0 634.0,652.3 634.0,691.5 600.0,709.8 566.0,691.5 566.0,652.3"/>
<polygon points="668.0,634.0 702.0,652.3 702.0,691.5 668.0,709.8 634.0,691.5 634.0,652.3"/>
<polygon points="736.0,634.0 770.0,652.3 770.0,691.5 736.0,709.8 702.0,691.5 702.0,652.3"/>
<polygon points="804.0,634.0 838.0,652.3 838.0,691.5 804.0,709.8 770.0,691.5 770.0,652.3"/>
<polygon points="872.0,634.0 906.0,652.3 906.0,691.5 872.0,709.8 838.0,691.5 838.0,652.3"/>
<polygon points="430.0,691.4 464.0,709.7 464.0,748.9 430.0,767.2 396.0,748.9 396.0,709.7"/>
<polygon points="498.0,691.4 532.0,709.7 532.0,748.9 498.0,767.2 464.0,748.9 464.0,709.7"/>
<polygon points="566.0,691.4 600.0,709.7 600.0,748.9 566.0,767.2 532.0,748.9 532.0,709.7"/>
<polygon points="634.0,691.4 668.0,709.7 668.0,748.9 634.0,767.2 600.0,748.9 600.0,709.7"/>
<polygon points="702.0,691.4 736.0,709.7 736.0,748.9 702.0,767.2 668.0,748.9 668.0,709.7"/>
<polygon points="770.0,691.4 804.0,709.7 804.0,748.9 770.0,767.2 736.0,748.9 736.0,709.7"/>
<polygon points="838.0,691.4 872.0,709.7 872.0,748.9 838.0,767.2 804.0,748.9 804.0,709.7"/>
</g>
<polygon points="838.0,461.8 872.0,480.1 872.0,519.3 838.0,537.6 804.0,519.3 804.0,480.1" fill="none" stroke="#2a80c0" stroke-width="1"/>
<g fill="none" stroke="#2a80c0" stroke-width="0.9">
<polyline points="872.0,480.1 872.0,519.3 838.0,537.6"/>
<polyline points="838.0,460.3 872.0,479.0"/>
<polyline points="804.0,593.5 826.0,582.0"/>
<polyline points="877.0,706.0 906.0,690.0"/>
</g>
<polyline points="838.0,536.6 872.0,518.2" fill="none" stroke="#e8e070" stroke-width="1" stroke-dasharray="1.5 1.5"/>
<g fill="none" stroke="#8c0a0c" stroke-width="3.5" stroke-linejoin="miter" stroke-linecap="butt">
<polyline points="430.0,537.6 464.0,519.3 498.0,537.6 498.0,576.7 532.0,595.0 566.0,576.7 566.0,537.6 532.0,519.3 532.0,480.1 566.0,461.8 600.0,480.1 600.0,519.3 634.0,537.6 668.0,519.3 702.0,537.6 736.0,519.3 770.0,537.6 770.0,576.7 804.0,595.0 804.0,634.1 838.0,652.4 873.0,634.1"/>
<polyline points="566.0,576.7 600.0,595.0 600.0,634.1 634.0,652.4 634.0,691.5 668.0,709.8 668.0,720.0"/>
<polyline points="430.0,535.6 430.0,578.7"/>
</g>
<path d="M658 590 Q664 584 672 587 Q680 584 688 590 L700 600 Q706 612 700 622 Q708 630 712 640 Q714 650 706 654 Q700 654 698 660 Q694 668 688 664 Q684 656 686 648 Q680 640 670 636 Q660 632 662 620 Q654 612 658 604 Q662 598 658 590Z" fill="#bcdcf4" stroke="#4a8adc" stroke-width="2"/>
<path d="M682 608 Q674 614 678 622 Q684 628 690 622" fill="none" stroke="#4a8adc" stroke-width="2"/>
<g fill="none" stroke="#2c2c28" stroke-width="0.9"><polyline points="668.0,594.9 668.0,634.1 702.0,652.4 702.0,672.4"/><polyline points="668.0,594.9 650.0,584.9"/></g>
<text x="715" y="604" font-family="DejaVu Sans,sans-serif" font-weight="bold" font-size="13.5" fill="#1a1a1a">Tabriz</text>
<text x="655" y="678" font-family="DejaVu Sans,sans-serif" font-weight="bold" font-size="10.5" letter-spacing="0.55" fill="#12128c">Lake Urmia</text>
<text x="732" y="465.5" font-family="DejaVu Sans,sans-serif" font-weight="bold" font-style="italic" font-size="13" fill="#1414f0">Kura</text>
<text x="433.6" y="634" text-anchor="end" font-family="DejaVu Sans,sans-serif" font-weight="bold" font-size="14" fill="#1a1a1a">ul</text><rect x="434" y="623" width="1.2" height="11" fill="#1a1a1a"/><rect x="435.2" y="623" width="1.2" height="11" fill="#c05010"/>
<circle cx="447" cy="622" r="4.5" fill="#f4f000" stroke="#222" stroke-width="1"/>
<path d="M903.5 495.6 L909.0 501.1 M909.0 497.8 L909.0 501.1 L905.7 501.1" stroke="#9cb8d0" stroke-width="1.1" fill="none" opacity="0.8"/>
<path d="M971.3 495.6 L976.8 501.1 M976.8 497.8 L976.8 501.1 L973.5 501.1" stroke="#9cb8d0" stroke-width="1.1" fill="none" opacity="0.8"/>
<path d="M869.0 553.0 L874.5 558.5 M874.5 555.2 L874.5 558.5 L871.2 558.5" stroke="#9cb8d0" stroke-width="1.1" fill="none" opacity="0.8"/>
<path d="M936.8 553.0 L942.3 558.5 M942.3 555.2 L942.3 558.5 L939.0 558.5" stroke="#9cb8d0" stroke-width="1.1" fill="none" opacity="0.8"/>
<path d="M1005.0 553.0 L1010.5 558.5 M1010.5 555.2 L1010.5 558.5 L1007.2 558.5" stroke="#9cb8d0" stroke-width="1.1" fill="none" opacity="0.8"/>
<path d="M903.5 609.5 L909.0 615.0 M909.0 611.7 L909.0 615.0 L905.7 615.0" stroke="#9cb8d0" stroke-width="1.1" fill="none" opacity="0.8"/>
<path d="M971.3 609.5 L976.8 615.0 M976.8 611.7 L976.8 615.0 L973.5 615.0" stroke="#9cb8d0" stroke-width="1.1" fill="none" opacity="0.8"/>
<path d="M936.8 667.0 L942.3 672.5 M942.3 669.2 L942.3 672.5 L939.0 672.5" stroke="#9cb8d0" stroke-width="1.1" fill="none" opacity="0.8"/>
<path d="M1004.8 667.0 L1010.3 672.5 M1010.3 669.2 L1010.3 672.5 L1007.0 672.5" stroke="#9cb8d0" stroke-width="1.1" fill="none" opacity="0.8"/>
<rect x="681" y="591" width="47" height="47" rx="5" fill="#000"/>
<rect x="679.6" y="589.8" width="46.6" height="46" rx="4.5" fill="#bc7a10" stroke="#fff" stroke-width="1.4"/>
<text x="702.7" y="600.6" text-anchor="middle" font-family="Liberation Sans,sans-serif" font-size="10.2" letter-spacing="-0.4" fill="#2a1e0a">1 OIL</text>
<g><rect x="682.5" y="605" width="9" height="15" fill="#b8b8b8" stroke="#3a3a3a" stroke-width="0.6"/><ellipse cx="687.0" cy="605" rx="4.5" ry="1.8" fill="#d8d8d8" stroke="#3a3a3a" stroke-width="0.6"/><ellipse cx="687.0" cy="620" rx="4.5" ry="1.8" fill="#a0a0a0" stroke="#3a3a3a" stroke-width="0.5"/><path d="M682.5 610.0 q4.5 2 9 0 M682.5 615.0 q4.5 2 9 0" stroke="#555" stroke-width="0.6" fill="none"/></g>
<g><rect x="702" y="604" width="9" height="15" fill="#b8b8b8" stroke="#3a3a3a" stroke-width="0.6"/><ellipse cx="706.5" cy="604" rx="4.5" ry="1.8" fill="#d8d8d8" stroke="#3a3a3a" stroke-width="0.6"/><ellipse cx="706.5" cy="619" rx="4.5" ry="1.8" fill="#a0a0a0" stroke="#3a3a3a" stroke-width="0.5"/><path d="M702 609.0 q4.5 2 9 0 M702 614.0 q4.5 2 9 0" stroke="#555" stroke-width="0.6" fill="none"/></g>
<g><rect x="713" y="605" width="9" height="15" fill="#b8b8b8" stroke="#3a3a3a" stroke-width="0.6"/><ellipse cx="717.5" cy="605" rx="4.5" ry="1.8" fill="#d8d8d8" stroke="#3a3a3a" stroke-width="0.6"/><ellipse cx="717.5" cy="620" rx="4.5" ry="1.8" fill="#a0a0a0" stroke="#3a3a3a" stroke-width="0.5"/><path d="M713 610.0 q4.5 2 9 0 M713 615.0 q4.5 2 9 0" stroke="#555" stroke-width="0.6" fill="none"/></g>
<g><rect x="691" y="608" width="9" height="15" fill="#b8b8b8" stroke="#3a3a3a" stroke-width="0.6"/><ellipse cx="695.5" cy="608" rx="4.5" ry="1.8" fill="#d8d8d8" stroke="#3a3a3a" stroke-width="0.6"/><ellipse cx="695.5" cy="623" rx="4.5" ry="1.8" fill="#a0a0a0" stroke="#3a3a3a" stroke-width="0.5"/><path d="M691 613.0 q4.5 2 9 0 M691 618.0 q4.5 2 9 0" stroke="#555" stroke-width="0.6" fill="none"/></g>
<g><rect x="707" y="608" width="9" height="15" fill="#b8b8b8" stroke="#3a3a3a" stroke-width="0.6"/><ellipse cx="711.5" cy="608" rx="4.5" ry="1.8" fill="#d8d8d8" stroke="#3a3a3a" stroke-width="0.6"/><ellipse cx="711.5" cy="623" rx="4.5" ry="1.8" fill="#a0a0a0" stroke="#3a3a3a" stroke-width="0.5"/><path d="M707 613.0 q4.5 2 9 0 M707 618.0 q4.5 2 9 0" stroke="#555" stroke-width="0.6" fill="none"/></g>
<g><rect x="693" y="611" width="9" height="15" fill="#b8b8b8" stroke="#3a3a3a" stroke-width="0.6"/><ellipse cx="697.5" cy="611" rx="4.5" ry="1.8" fill="#d8d8d8" stroke="#3a3a3a" stroke-width="0.6"/><ellipse cx="697.5" cy="626" rx="4.5" ry="1.8" fill="#a0a0a0" stroke="#3a3a3a" stroke-width="0.5"/><path d="M693 616.0 q4.5 2 9 0 M693 621.0 q4.5 2 9 0" stroke="#555" stroke-width="0.6" fill="none"/></g>
<g><rect x="698" y="614" width="11" height="18" fill="#b8b8b8" stroke="#3a3a3a" stroke-width="0.6"/><ellipse cx="703.5" cy="614" rx="5.5" ry="1.8" fill="#d8d8d8" stroke="#3a3a3a" stroke-width="0.6"/><ellipse cx="703.5" cy="632" rx="5.5" ry="1.8" fill="#a0a0a0" stroke="#3a3a3a" stroke-width="0.5"/><path d="M698 620.0 q5.5 2 11 0 M698 626.0 q5.5 2 11 0" stroke="#555" stroke-width="0.6" fill="none"/></g>
<rect x="851" y="455" width="47" height="13" rx="4" fill="#000"/>
<rect x="849.6" y="453" width="46.6" height="13" rx="4" fill="#bc7a10" stroke="#fff" stroke-width="1.4"/>
<circle cx="862" cy="459" r="5" fill="#f01818"/>
</svg>
</body></html>
